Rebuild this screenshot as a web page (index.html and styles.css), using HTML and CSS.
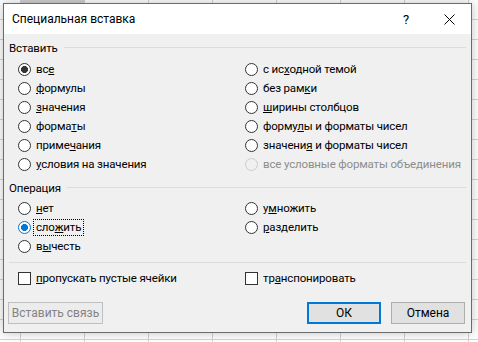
FILE: index.html
```html
<!doctype html>
<html lang="ru">
  <head>
    <meta charset="UTF-8" />
    <title>Специальная вставка</title>
    <link rel="stylesheet" href="styles.css">
  </head>
  <body>
    <div class="dialog">
      <div class="titlebar">
        <span class="title">Специальная вставка</span>
        <span class="help">?</span>
        <svg class="close" viewBox="0 0 11 11" width="11" height="11">
          <path d="M0.5 0.5L10.5 10.5M10.5 0.5L0.5 10.5" stroke="#000" stroke-width="1" fill="none"/>
        </svg>
      </div>

      <div class="body">
        <div class="group-title">Вставить</div>
        <div class="options paste">
          <label class="option"><span class="radio checked"></span><span class="text">вс<u>е</u></span></label>
          <label class="option"><span class="radio"></span><span class="text">с ис<u>х</u>одной темой</span></label>
          <label class="option"><span class="radio"></span><span class="text"><u>ф</u>ормулы</span></label>
          <label class="option"><span class="radio"></span><span class="text">без рам<u>к</u>и</span></label>
          <label class="option"><span class="radio"></span><span class="text"><u>з</u>начения</span></label>
          <label class="option"><span class="radio"></span><span class="text"><u>ш</u>ирины столбцов</span></label>
          <label class="option"><span class="radio"></span><span class="text">форма<u>т</u>ы</span></label>
          <label class="option"><span class="radio"></span><span class="text">форму<u>л</u>ы и форматы чисел</span></label>
          <label class="option"><span class="radio"></span><span class="text">приме<u>ч</u>ания</span></label>
          <label class="option"><span class="radio"></span><span class="text">значени<u>я</u> и форматы чисел</span></label>
          <label class="option"><span class="radio"></span><span class="text"><u>у</u>словия на значения</span></label>
          <label class="option disabled"><span class="radio"></span><span class="text">все условные форматы объединения</span></label>
        </div>

        <div class="group-title op-title">Операция</div>
        <div class="options operation">
          <label class="option"><span class="radio"></span><span class="text"><u>н</u>ет</span></label>
          <label class="option"><span class="radio"></span><span class="text">у<u>м</u>ножить</span></label>
          <label class="option"><span class="radio focused checked"></span><span class="text focus">сло<u>ж</u>ить</span></label>
          <label class="option"><span class="radio"></span><span class="text"><u>р</u>азделить</span></label>
          <label class="option"><span class="radio"></span><span class="text">в<u>ы</u>честь</span></label>
        </div>

        <div class="separator"></div>

        <div class="options checks">
          <label class="option"><span class="checkbox"></span><span class="text"><u>п</u>ропускать пустые ячейки</span></label>
          <label class="option"><span class="checkbox"></span><span class="text">тр<u>а</u>нспонировать</span></label>
        </div>

        <div class="buttons">
          <button class="button disabled">Вставить связь</button>
          <span class="spacer"></span>
          <button class="button default">ОК</button>
          <button class="button">Отмена</button>
        </div>
      </div>
    </div>
  </body>
</html>
```

FILE: styles.css
```css
* {
  margin: 0;
  padding: 0;
  box-sizing: border-box;
}

body {
  width: 478px;
  height: 342px;
  overflow: hidden;
  font-family: Roboto, "Noto Sans", sans-serif;
  font-size: 11.5px;
  letter-spacing: -0.15px;
  color: #000;
  background-color: #fff;
  background-image:
    linear-gradient(#d0d0d0, #d0d0d0),
    linear-gradient(90deg, #d4d4d4 1px, transparent 1px),
    linear-gradient(#d4d4d4 1px, transparent 1px);
  background-size: 64px 4px, 64px 20px, 64px 20px;
  background-position: 21px 0, 20px 0, 0 19px;
  background-repeat: no-repeat, repeat, repeat;
  padding: 3px 0 0 3px;
}

.dialog {
  width: 469px;
  height: 330px;
  border: 1px solid #6b6b6b;
  background: #f0f0f0;
  box-shadow: 0 0 10px rgba(0, 0, 0, 0.25);
  display: flex;
  flex-direction: column;
}

.titlebar {
  height: 30px;
  background: #fff;
  display: flex;
  align-items: center;
  padding: 0 16px 0 8px;
}

.title {
  flex: 1;
  font-size: 12px;
  letter-spacing: 0;
}

.help {
  font-size: 13px;
  margin-right: 35px;
}

.body {
  flex: 1;
  padding: 6px 5px 0 5px;
}

.group-title {
  height: 15px;
  display: flex;
  align-items: center;
  gap: 6px;
}

.group-title::after {
  content: '';
  flex: 1;
  height: 1px;
  background: #dcdcdc;
}

.options {
  display: grid;
  grid-template-columns: 227px 1fr;
  grid-auto-rows: 19px;
  padding-left: 9px;
  margin-top: 5px;
}

.op-title {
  margin-top: 6px;
}

.operation {
  margin-top: 4px;
}

.option {
  display: flex;
  align-items: center;
  gap: 2px;
  white-space: nowrap;
}

.text {
  padding: 0 2px;
  border: 1px dotted transparent;
  line-height: 15px;
}

.text.focus {
  border-color: #000;
}

.radio {
  width: 13px;
  height: 13px;
  flex: none;
  border: 1px solid #333;
  border-radius: 50%;
  background: #fff;
}

.radio.checked {
  background: radial-gradient(circle, #333 0 3.2px, #fff 3.8px);
}

.radio.focused {
  border-color: #0078d7;
  background: radial-gradient(circle, #0078d7 0 3.2px, #fff 3.8px);
}

.option.disabled .radio {
  border-color: #cccccc;
  background: transparent;
}

.option.disabled .text {
  color: #8d8d8d;
}

.separator {
  height: 1px;
  background: #dcdcdc;
  margin-top: 6px;
}

.checks {
  margin-top: 6px;
}

.checkbox {
  width: 13px;
  height: 13px;
  flex: none;
  border: 1px solid #333;
  background: #fff;
}

.buttons {
  display: flex;
  gap: 10px;
  margin: 14px 1px 0 -1px;
}

.spacer {
  flex: 1;
}

.button {
  height: 22px;
  width: 74px;
  font-family: inherit;
  font-size: 12px;
  color: #000;
  background: #e1e1e1;
  border: 1px solid #adadad;
}

.button.disabled {
  width: 95px;
  color: #838383;
  background: #ececec;
  border-color: #bfbfbf;
}

.button.default {
  border: 2px solid #0078d7;
}
```
